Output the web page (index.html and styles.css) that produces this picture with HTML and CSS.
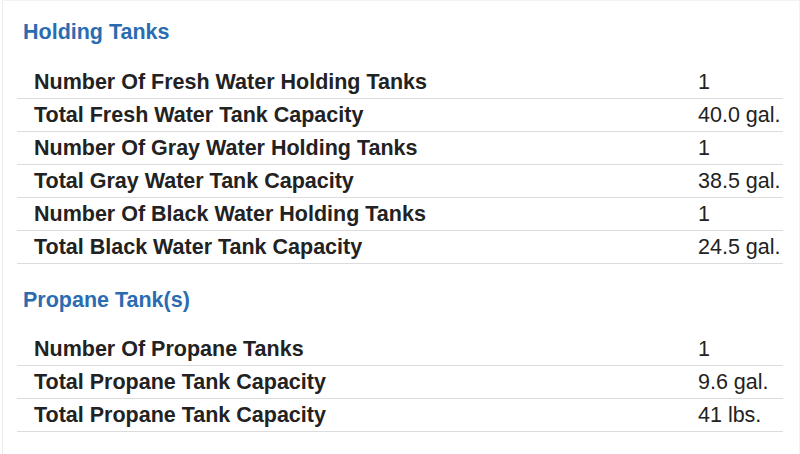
FILE: index.html
```html
<!DOCTYPE html>
<html>
<head>
<meta charset="utf-8">
<link rel="stylesheet" href="styles.css">
</head>
<body>
<div class="panel">
  <section class="group">
    <h2 class="title">Holding Tanks</h2>
    <table class="specs">
      <tr><th>Number Of Fresh Water Holding Tanks</th><td>1</td></tr>
      <tr><th>Total Fresh Water Tank Capacity</th><td>40.0 gal.</td></tr>
      <tr><th>Number Of Gray Water Holding Tanks</th><td>1</td></tr>
      <tr><th>Total Gray Water Tank Capacity</th><td>38.5 gal.</td></tr>
      <tr><th>Number Of Black Water Holding Tanks</th><td>1</td></tr>
      <tr><th>Total Black Water Tank Capacity</th><td>24.5 gal.</td></tr>
    </table>
  </section>
  <section class="group">
    <h2 class="title">Propane Tank(s)</h2>
    <table class="specs">
      <tr><th>Number Of Propane Tanks</th><td>1</td></tr>
      <tr><th>Total Propane Tank Capacity</th><td>9.6 gal.</td></tr>
      <tr><th>Total Propane Tank Capacity</th><td>41 lbs.</td></tr>
    </table>
  </section>
</div>
</body>
</html>
```

FILE: styles.css
```css
html, body {
  margin: 0;
  padding: 0;
  background: #ffffff;
}
body {
  font-family: "Liberation Sans", Arial, sans-serif;
  color: #222222;
}
.panel {
  box-sizing: border-box;
  width: 798px;
  height: 454px;
  margin-left: 2px;
  border-left: 1px solid #ececec;
  border-top: 1px solid #f2f2f2;
  border-right: 1px solid #f2f2f2;
  padding: 0 14px;
}
.title {
  margin: 0;
  box-sizing: border-box;
  padding-left: 6px;
  font-size: 21.5px;
  line-height: 24px;
  font-weight: bold;
  color: #2b6cb0;
}
.group:first-child .title {
  height: 65px;
  padding-top: 19px;
}
.group + .group .title {
  height: 69px;
  padding-top: 24px;
}
.specs {
  width: 766px;
  table-layout: fixed;
  border-collapse: collapse;
}
.specs th, .specs td {
  height: 32px;
  padding: 0 0 0 17px;
  border-bottom: 1px solid #dcdcdc;
  font-size: 21.5px;
  line-height: 24px;
  vertical-align: middle;
  text-align: left;
  white-space: nowrap;
}
.specs th {
  font-weight: bold;
  color: #222222;
}
.specs td {
  width: 85px;
  padding-left: 16px;
  font-weight: normal;
  color: #222222;
}
```
